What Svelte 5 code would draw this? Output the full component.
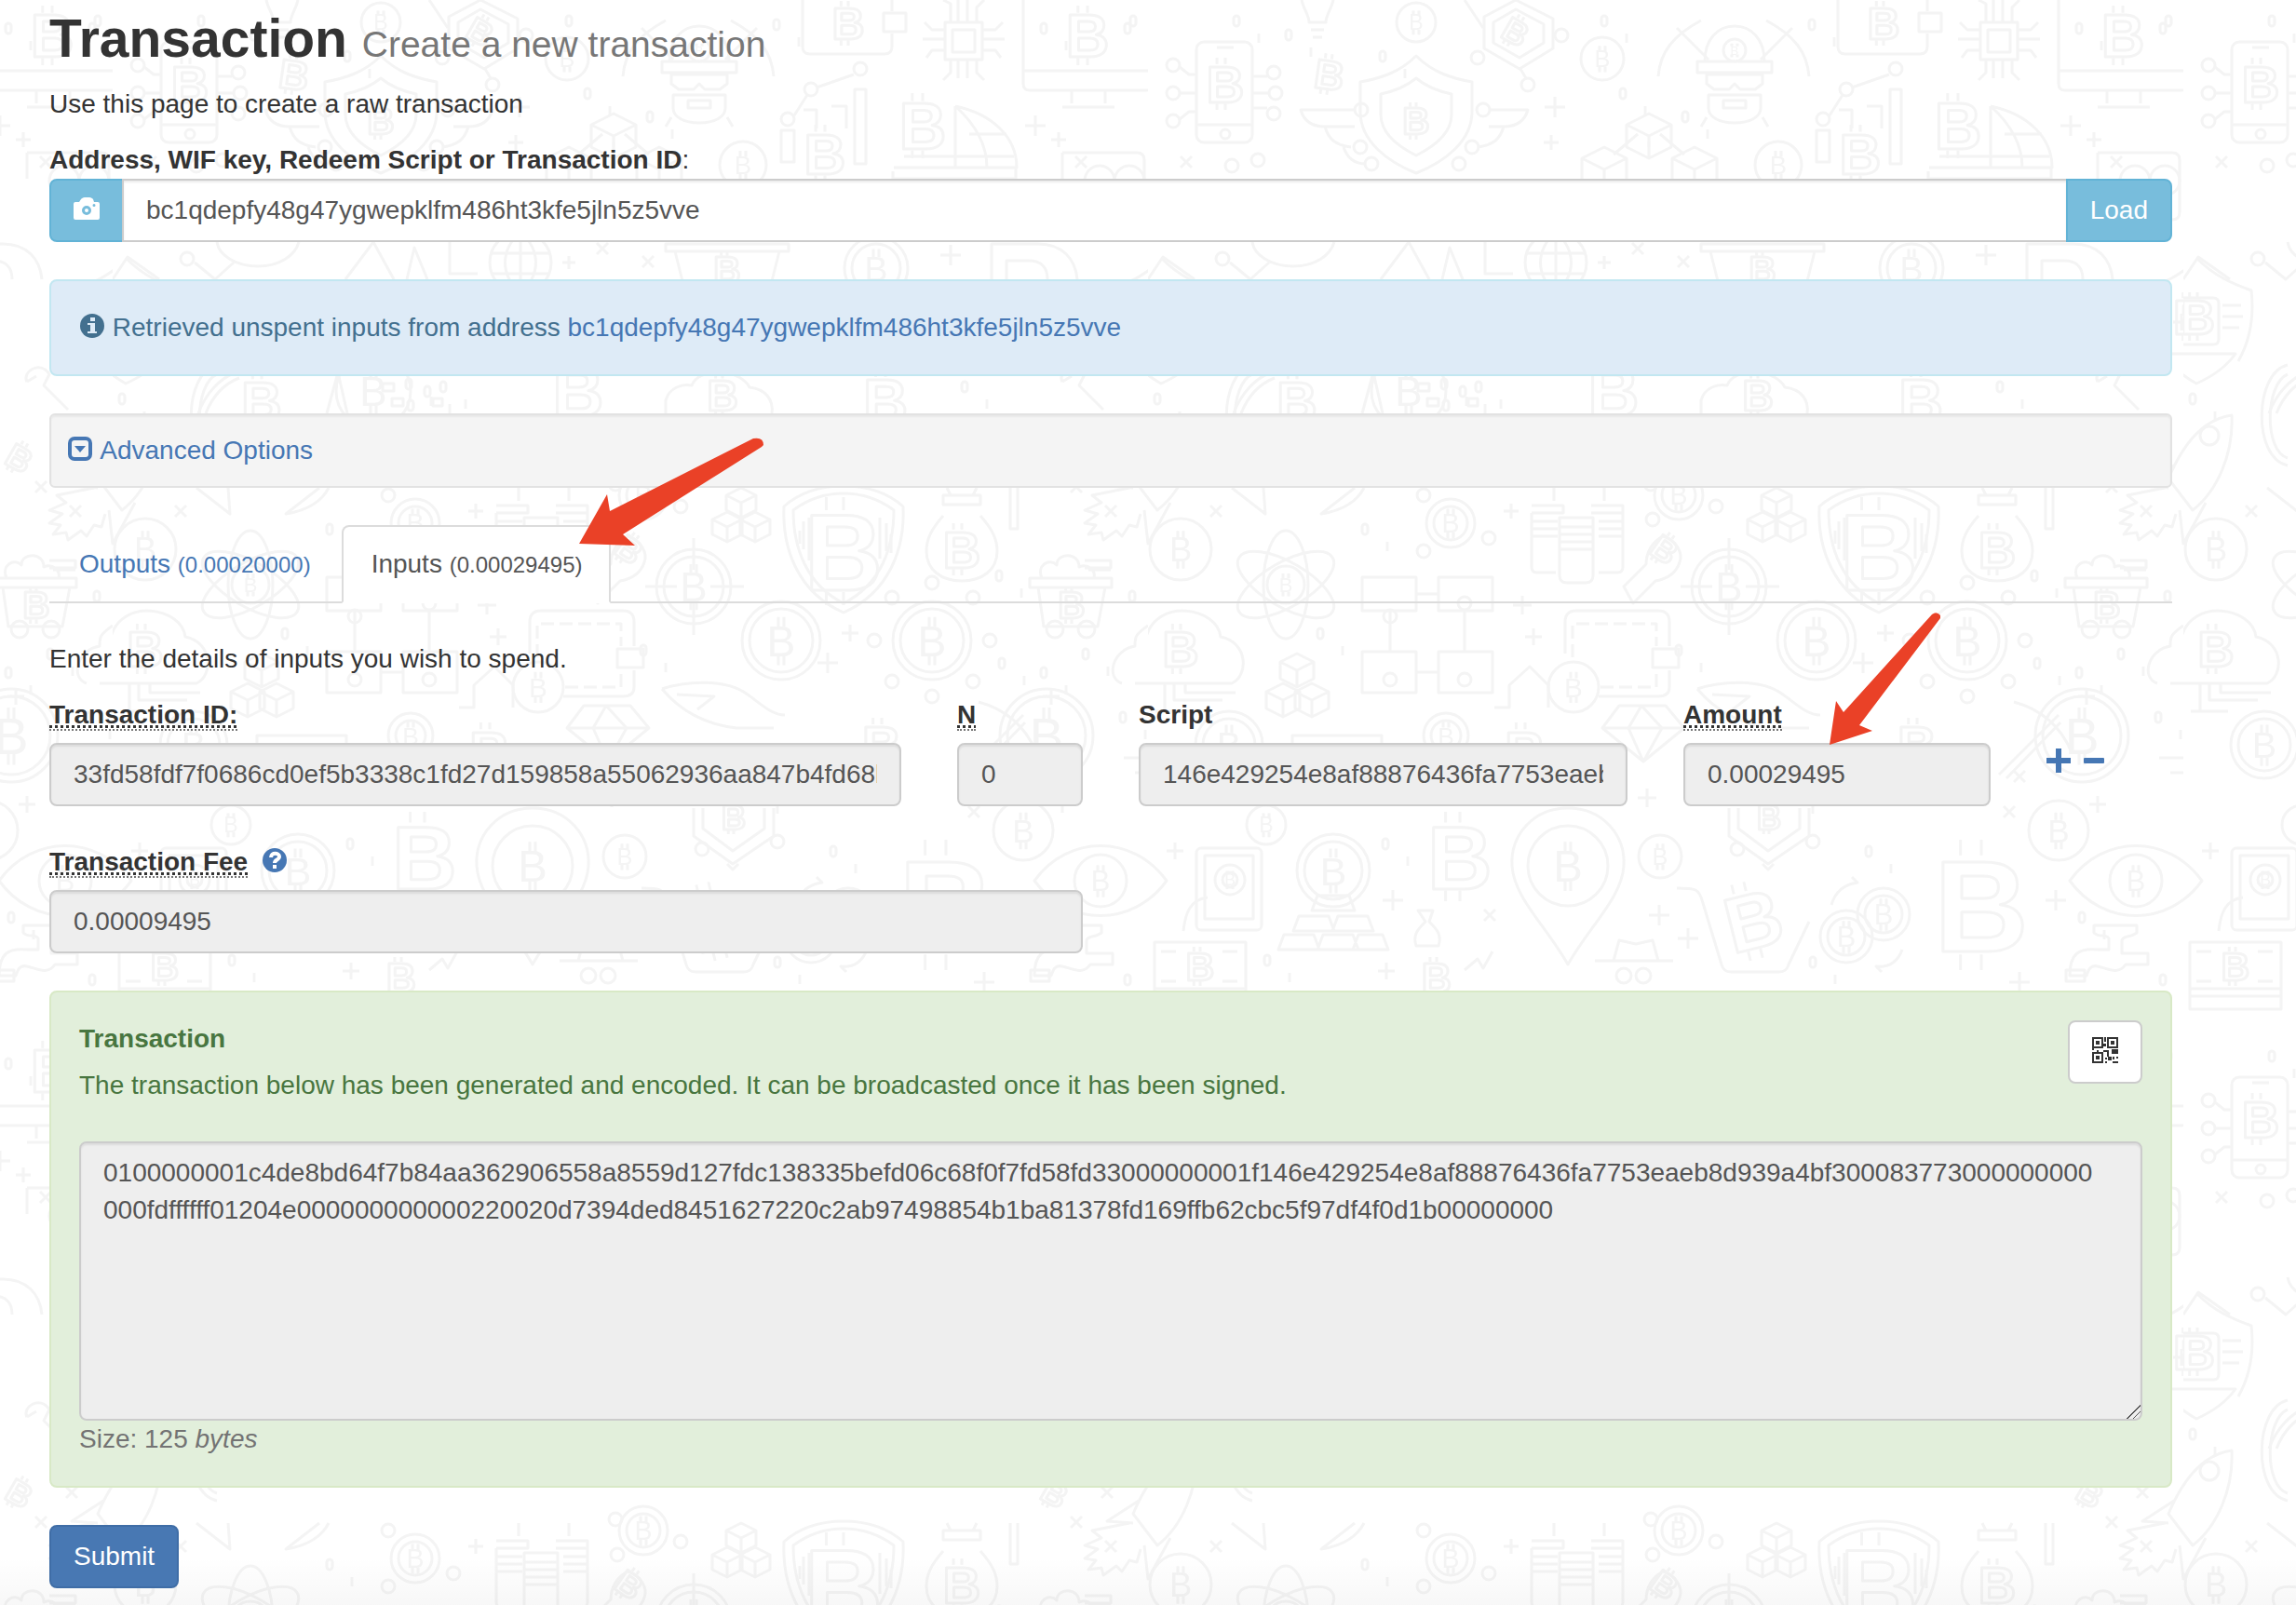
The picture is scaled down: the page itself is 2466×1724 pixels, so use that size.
<script lang="ts">
	let address = $state('bc1qdepfy48g47ygwepklfm486ht3kfe5jln5z5vve');
	let activeTab = $state('inputs');

	const tabs = [
		{ id: 'outputs', label: 'Outputs', total: '0.00020000' },
		{ id: 'inputs', label: 'Inputs', total: '0.00029495' }
	];

	const input = {
		txid: '33fd58fdf7f0686cd0ef5b3338c1fd27d159858a55062936aa847b4fd68bdec4',
		n: '0',
		script: '146e429254e8af88876436fa7753eaeb8d939a4bf300083773000000000000',
		amount: '0.00029495'
	};
	const fee = '0.00009495';
	const rawTx =
		'0100000001c4de8bd64f7b84aa362906558a8559d127fdc138335befd06c68f0f7fd58fd33000000001f' +
		input.script +
		'fdffffff01204e000000000000220020d7394ded8451627220c2ab97498854b1ba81378fd169ffb62cbc5f97df4f0d1b00000000';
	const size = 125;

	// wallpaper tile, 1112 x 1112: [x, y, radius, double ring]
	const coins: [number, number, number, boolean][] = [
		[288, 24, 21, false], [488, 63, 23, false], [677, 177, 25, false], [630, 54, 12, false],
		[820, 288, 34, true], [35, 590, 33, false], [325, 562, 26, true], [570, 532, 26, true],
		[624, 630, 40, true], [718, 688, 42, true], [880, 688, 42, true], [457, 738, 27, false],
		[1003, 790, 50, true], [87, 800, 36, true], [320, 790, 24, true], [127, 886, 21, false],
		[199, 935, 39, true], [88, 945, 16, true], [451, 930, 43, false], [550, 920, 23, false],
		[978, 892, 32, false], [1061, 946, 28, false], [790, 982, 28, true], [750, 1006, 28, true],
		[148, 628, 20, false], [280, 420, 40, false]
	];

	// outlined coin signs: [x, y, size, rotation]
	const signs: [number, number, number, number][] = [
		[83, 90, 56, 0], [195, 80, 44, 8], [288, 130, 40, 0], [790, 25, 48, 0], [1047, 38, 64, 0],
		[870, 135, 70, 0], [765, 165, 62, 0], [395, 34, 36, 30], [660, 290, 40, 0], [500, 420, 76, 0],
		[655, 424, 46, 0], [830, 430, 66, 0], [785, 592, 116, 0], [912, 590, 56, 0], [1030, 650, 40, 0],
		[35, 697, 54, 0], [15, 340, 52, 0], [1120, 340, 52, 0], [405, 806, 60, 0], [335, 920, 96, 0],
		[650, 988, 84, -14], [895, 972, 140, 0], [56, 1038, 42, 0], [310, 1050, 44, 0], [667, 878, 36, 0],
		[555, 590, 36, 35], [160, 430, 60, 0], [1012, 492, 36, 30], [826, 800, 58, 0]
	];

	const nodes: [number, number][] = [
		[27, 70], [27, 100], [27, 130], [135, 78], [137, 100], [135, 122], [354, 62], [408, 91], [444, 38],
		[750, 96], [803, 74], [725, 128], [80, 278], [229, 118], [360, 118], [228, 158], [348, 158],
		[240, 176], [334, 176], [296, 532], [366, 578], [296, 592], [542, 558], [610, 544], [540, 520],
		[880, 626], [837, 642], [924, 642], [818, 688], [942, 688], [837, 732], [924, 732], [880, 748],
		[260, 662], [340, 648], [260, 730], [340, 730], [633, 912], [714, 904], [90, 178], [118, 172]
	];

	const crosses: [number, number, number][] = [
		[437, 115, 11], [433, 153, 8], [991, 135, 11], [1016, 150, 8], [490, 282, 7], [900, 274, 11],
		[390, 549, 8], [402, 650, 10], [414, 684, 9], [792, 680, 9], [768, 712, 11], [536, 857, 10],
		[1020, 864, 9], [29, 914, 9], [263, 967, 11], [549, 983, 11], [580, 1008, 11], [975, 967, 11],
		[936, 1055, 11], [256, 1043, 9], [1008, 748, 9], [1110, 346, 9]
	];

	const exes: [number, number][] = [
		[41, 174], [526, 267], [575, 281], [73, 549], [1068, 491], [1035, 523], [1072, 549], [936, 834],
		[367, 983], [1040, 174], [925, 872]
	];

	const zeros: [number, number][] = [
		[95, 22], [151, 37], [252, 60], [490, 22], [713, 26], [510, 100], [577, 125], [318, 412], [338, 420],
		[915, 415], [10, 428], [233, 568], [952, 618], [185, 680], [570, 698], [955, 712], [1000, 722],
		[1045, 702], [1095, 640], [255, 906], [774, 914], [1003, 985], [128, 1031], [714, 1033],
		[1090, 1052], [1096, 22], [1000, 30], [1090, 30], [690, 850], [1085, 770], [320, 435], [355, 415]
	];

	const cubes: [number, number, number][] = [
		[538, 146, 24], [490, 182, 24], [587, 182, 24], [675, 540, 16], [660, 566, 16], [690, 566, 16],
		[160, 720, 18], [145, 752, 18], [176, 752, 18]
	];

	function cubePath([x, y, r]: [number, number, number]) {
		const h = r / 2;
		return `M${x} ${y - r}l${r} ${h}v${r}l${-r} ${h}l${-r} ${-h}v${-r}zM${x - r} ${y - h}l${r} ${h}l${r} ${-h}M${x} ${y}v${r}`;
	}
</script>

<div class="page">
	<svg class="wallpaper" aria-hidden="true">
		<defs>
			<pattern id="tile" x="121" y="0" width="1112" height="1112" patternUnits="userSpaceOnUse">
				<g class="art">
					{#each coins as [x, y, r, ring]}
						<circle cx={x} cy={y} {r} />
						{#if ring}<circle cx={x} cy={y} r={r - 8} />{/if}
						<text class="solid" {x} y={y + r * 0.4} font-size={r * 1.1}>B</text>
						<path d="M{x - 3} {y - r * 0.6}v{r * 0.25}M{x + 3} {y - r * 0.6}v{r * 0.25}M{x - 3} {y + r * 0.38}v{r * 0.25}M{x + 3} {y + r * 0.38}v{r * 0.25}" />
					{/each}
					{#each signs as [x, y, s, turn]}
						<g transform="translate({x} {y}) rotate({turn})">
							<text x="0" y={s * 0.36} font-size={s}>B</text>
							<path d="M{-s * 0.16} {-s * 0.38}v{-s * 0.12}M0 {-s * 0.38}v{-s * 0.12}M{-s * 0.16} {s * 0.38}v{s * 0.12}M0 {s * 0.38}v{s * 0.12}" />
						</g>
					{/each}
					{#each nodes as [x, y]}
						<circle cx={x} cy={y} r="7" />
					{/each}
					{#each crosses as [x, y, s]}
						<path d="M{x - s} {y}h{s * 2}M{x} {y - s}v{s * 2}" />
					{/each}
					{#each exes as [x, y]}
						<path d="M{x - 6} {y - 6}l12 12M{x + 6} {y - 6}l-12 12" />
					{/each}
					{#each zeros as [x, y]}
						<rect x={x - 3} y={y - 5} width="6" height="11" rx="3" />
						<path d="M{x + 24} {y + 14}v10" />
					{/each}
					{#each cubes as cube}
						<path d={cubePath(cube)} />
					{/each}

					<!-- phone, shield with wings, cards -->
					<rect x="52" y="45" width="60" height="108" rx="8" />
					<path d="M52 134h60M74 51h18M34 72l10 8h8M34 100h18M34 128l10-8h8M112 82h16M112 100h18M112 116h16" />
					<circle cx="83" cy="144" r="5" />
					<path d="M288 60c18 18 38 24 60 28v32c0 32-30 54-60 66c-30-12-60-34-60-66v-32c22-4 42-10 60-28z" />
					<path d="M288 84c12 10 24 14 38 17v22c0 20-18 34-38 44c-20-10-38-24-38-44v-22c14-3 26-7 38-17z" />
					<path d="M222 118h-58c4 14 14 18 26 18h32M190 136c4 14 12 20 28 22M210 158c4 12 12 18 24 18M366 118h42c-4 14-14 18-26 18h-16M382 136c-4 14-12 20-28 22" />
					<path d="M395 0l40 20v32l-36 22l-38-22v-34zM395 10l30 16v20l-26 16l-28-16v-22z" />
					<path d="M340 0l20 30M400 74l6 10M165 0c2 10 8 16 8 24h18c0-8 6-14 8-24M175 32h14M177 40h10" />

					<!-- miner -->
					<path d="M598 66c0-24 14-38 32-38s32 14 32 38zM590 66h80v12h-80zM600 80h60v10l-8 6h-16l-6-6l-6 6h-16l-8-6zM602 102h56v14c0 10-12 16-28 16s-28-6-28-16zM618 108h24v8h-24z" />
					<path d="M548 82c2-26 16-44 46-60M710 82c-2-26-16-44-46-60M568 30l34 34M692 30l-34 34M600 126l-6 10M660 126l6 10" />

					<!-- wallet, chip, monitor -->
					<path d="M741 0v50q0 8 8 8h80q8 0 8-8v-14M837 12v-12M828 14h24v20h-24z" />
					<path d="M894 24h40v40h-40zM902 32h24v24h-24zM900 24v-20l-8-4M908 24v-24M918 24v-24M928 24v-16l8-8M900 64v14l-8 8M908 64v20M918 64v20M928 64v14l8 8M894 32h-14l-8-8M894 42h-24M894 54h-14l-6 8M934 32h14l8-8M934 42h24M934 54h14l6 8" />
					<path d="M978 0v90q0 7 7 7h125q7 0 7-7v-90M978 76h139M1030 97v14M1066 97v14M1020 115h56" />

					<!-- chart, globe, gift, blocks -->
					<path d="M718 140h14v34h-14zM797 96h12v80h-12zM742 118h14v20M772 114h16v24M732 124l14-22M756 94l40-14" />
					<path d="M905 114c38 8 66 32 66 66h-132M905 114v66M905 114c20 18 34 40 34 66M850 168h118M920 144h40M838 184v8h132v-12" />
					<path d="M1020 164h80q8 0 8 8v56q0 8-8 8h-30M1020 164v28" />
					<circle cx="1060" cy="194" r="16" />
					<circle cx="1092" cy="194" r="16" />
					<path d="M538 158v-6M500 166l26-22M576 166l-26-22" />

					<!-- thin strip between the address box and the alert -->
					<path d="M0 300l16-24l34 24M112 260c2 14 20 26 44 26s40-12 44-26M88 282l22 18l20-18M250 300l30-40l22 40M316 300l8-34l14 34M362 260v34h30" />
					<circle cx="438" cy="282" r="33" />
					<path d="M438 249v66M406 272h64M408 294h60M438 249c-22 20-22 46 0 66M438 249c22 20 22 46 0 66" />
					<path d="M594 262h132v8h-132zM604 270l10 40M716 270l-10 40M944 300v-38h50c26 0 40 16 42 38M960 300v-20h24c14 0 20 8 20 20" />
					<path d="M92 444c8-22 24-38 40-44M100 444c8-20 20-32 36-38M230 444l12-44l10 44M290 412h12v8h-12zM300 428h12v8h-12zM344 428h10v8h-10z" />
					<path d="M594 444v-14c4-14 18-18 28-16c4-10 14-14 30-14s28 8 32 16c18 2 26 14 24 28M1020 410c-6-10 14-24 24-8l-6 12l26 26M1030 404l-10 6" />

					<!-- shield with a card and the rocket, both cross the tile edge -->
					<path d="M15 278c18 18 36 26 58 34c4 36-6 62-14 76M-6 320h38q6 0 6 6v38q0 6-6 6h-38M42 328h20M42 340h22M42 352h18M-20 380h76c-10 14-24 24-42 32c-18-10-28-20-34-32z" />
					<path d="M1127 278c-18 18-36 26-58 34c4 36 6 62 14 76M1086 380h26" />
					<path d="M52 446c-30 4-52 30-68 68l26 34c26-20 44-60 42-102zM-10 500l-34 22l28 2M24 540l-24 44l-4-36" />
					<path d="M1164 446c-30 4-52 30-68 68l26 34M1102 500l-34 22l28 2M1136 540l-24 44l-4-36" />
					<circle cx="28" cy="468" r="10" />
					<path d="M1092 524l-40 8l10 8l-18 8l14 4l-14 10l12 2l-8 10l14-2l2 8l14-10l6 6l8-12l8 2l4-14" />
					<path d="M112 392c-36 8-38 100 0 108M112 402c-24 10-26 82 0 90" />

					<!-- atom, servers, key -->
					<ellipse cx="148" cy="628" rx="24" ry="58" />
					<ellipse cx="148" cy="628" rx="24" ry="58" transform="rotate(60 148 628)" />
					<ellipse cx="148" cy="628" rx="24" ry="58" transform="rotate(-60 148 628)" />
					<path d="M90 524l36 28l-2-28M232 524c-6 12-20 24-46 28l36-28" />
					<path d="M442 556h36v62q0 8-8 8h-20q-8 0-8-8zM442 566h36M442 574h36M442 582h36M442 590h36M412 543h34v8h-34M412 560h28M412 568h28M412 576h28M412 551v58q0 6 6 6h20M476 543h34v8h-34M484 560h26M484 568h26M484 576h26M510 551v58q0 6-6 6h-20M436 524v14M490 524v14" />
					<path d="M553 576c14 4 22 18 18 28c-4 12-14 18-26 20l-24 24l-10-18l24-24c0-12 6-24 18-30z" />
					<path d="M624 578v34M624 646v36M572 630h34M642 630h36" />

					<!-- large shield, money bag, cart -->
					<path d="M785 522c-22 0-46 6-64 22c-2 44 14 92 64 114c50-22 66-70 64-114c-18-16-42-22-64-22z" />
					<path d="M785 530c-18 0-38 6-54 18c0 40 14 80 54 100c40-20 54-60 54-100c-16-12-36-18-54-18z" />
					<path d="M742 560v30M748 556v46M824 556v44M831 562v30M738 570v14M836 574v20" />
					<path d="M892 532h40v10h-40zM896 524l4 8M928 524l-4 8M892 554c-14 16-18 26-18 38c0 20 16 32 38 32s38-12 38-32c0-12-4-22-18-38M964 524v44h8v-44" />
					<path d="M985 621h88v10h-88zM994 631l6 42h58l8-42M998 621c-6-14 8-22 16-14c0-14 24-14 24 2c10-4 18 4 16 12M1044 602h28v8h-28M1048 612h24" />
					<circle cx="1012" cy="676" r="9" />
					<circle cx="1046" cy="676" r="9" />

					<!-- cloud, network boxes, card holder -->
					<path d="M-14 734h104c18-8 18-44-12-50c-4-32-68-42-80 0c-24 4-32 42-12 50zM18 734v30M28 734v18h52M40 734v10h54M8 764h40" />
					<path d="M1098 734h14M1112 672c-14 10-14 12-14 22c-24 4-32 34-14 40" />
					<path d="M230 620h58v36h-58zM312 620h58v36h-58zM230 700h58v44h-58zM312 700h58v44h-58zM260 656v44M340 656v44M288 638h24M288 722h24" />
					<path d="M456 706v-36h90v24M546 724v14h-62" stroke-dasharray="14 6" />
					<path d="M448 702v-34q0-12 12-12h88q12 0 12 12v26M560 720v18q0 10-12 10h-64M542 697h28v20h-28z" />

					<!-- hand, pickaxe and houses -->
					<path d="M590 740c24-8 68-12 92 6c14 10 26 22 40 22M590 740c20 24 46 38 80 42h40M606 746l40 2l-18 14M506 758h50l20 24l-44 36l-44-36zM488 782h88M530 758l-14 24l16 36l20-36z" />
					<path d="M930 754c30 8 50 26 62 54M978 768l-64 64M980 776l-58 60M372 760h16v-24l22-20l20 20v24" />
					<path d="M1086 814h30c12 12 16 30 10 42M1098 830h16l8 12M155 790h96v12h-96z" />

					<!-- tablet, ingots, pin -->
					<rect x="52" y="911" width="70" height="88" rx="5" />
					<path d="M61 919h52v68h-52zM38 1000c2-20 8-34 26-36M182 962h34l6 16h-46zM162 984h32l6 16h-44zM204 984h32l6 16h-44zM146 1004h32l6 16h-44zM188 1004h32l6 16h-44zM226 1004h26l6 16h-38z" />
					<path d="M451 868c-38 0-62 30-60 62c2 34 36 64 60 106c24-42 58-72 60-106c2-32-22-62-60-62z" />
					<path d="M624 868v30l42 30l44-30v-30M634 868v22l32 24l34-24v-22M660 928l6 6l6-6" />
					<path d="M568 954c20 0 24 0 28 16l20 66q2 8 10 8h52q8 0 10-8l22-46" />
					<path d="M734 972c4-14 14-22 28-24l-6-6M810 1020c-4 12-14 20-28 18l6 6" />

					<!-- eye, tap, bank note, hat -->
					<path d="M990 946c36-50 106-50 142 0c-36 50-106 50-142 0z" />
					<path d="M-122 946c36-50 106-50 142 0c-36 50-106 50-142 0z" />
					<path d="M1016 1002v-8h46v8c-8 6-14 2-16 8v14h28v12h-24c-8 12-20 4-30 2c-8-2-10 4-12 10h-18c0-24 10-30 30-28h12v-12c-4-6-10 0-16-6zM986 1042h20v12h-20z" />
					<path d="M7 1012h98v72h-98zM7 1062h98M7 1070h98M14 1022h16M80 1022h16M14 1054h16M80 1054h16" />
					<path d="M480 1032h84M500 1032l6-22l18 4l18-4l6 22M290 978l16 0l-4 12c8 8 14 14 10 26h-24c-4-12 2-18 10-26zM340 1042l14-12l6 10l10-18" />
					<circle cx="511" cy="1048" r="8" />
					<circle cx="532" cy="1048" r="8" />
				</g>
			</pattern>
			<linearGradient id="fade" x1="0" y1="0" x2="0" y2="1">
				<stop offset="0" stop-color="#000" stop-opacity="0" />
				<stop offset="1" stop-color="#000" stop-opacity="0.03" />
			</linearGradient>
		</defs>
		<rect width="100%" height="100%" fill="url(#tile)" />
		<rect y="97%" width="100%" height="3%" fill="url(#fade)" />
	</svg>

	<main>
		<h2>Transaction <small>Create a new transaction</small></h2>
		<p>Use this page to create a raw transaction</p>

		<label class="plain-label" for="address"><b>Address, WIF key, Redeem Script or Transaction ID</b>:</label>
		<div class="input-group">
			<button class="btn btn-info" type="button" aria-label="Scan QR code">
				<svg class="icon" viewBox="0 0 28 28">
					<path fill="currentColor" fill-rule="evenodd" d="M2 7h4l2-3c1-1 2-2 4-2h5c2 0 3 1 4 2l1 3h4q2 0 2 2v15q0 2-2 2H2q-2 0-2-2V9q0-2 2-2zM14 11a5 5 0 1 0 0 10a5 5 0 0 0 0-10zM22 9a1 1 0 1 0 0 3a1 1 0 0 0 0-3zM14 14a2 2 0 1 1 0 4a2 2 0 0 1 0-4z" />
				</svg>
			</button>
			<input id="address" class="form-control" type="text" bind:value={address} />
			<button class="btn btn-info load" type="button">Load</button>
		</div>

		<div class="alert alert-info">
			<svg class="icon" viewBox="0 0 28 28" aria-hidden="true">
				<circle cx="14" cy="14" r="13" fill="currentColor" />
				<path fill="#deebf7" d="M12 5h5v4h-5zM9 11h8v9h2v2H9v-2h3v-7H9z" />
			</svg>
			Retrieved unspent inputs from address <a href="#address">{address}</a>
		</div>

		<div class="well">
			<a href="#advanced">
				<svg class="icon" viewBox="0 0 28 28" aria-hidden="true">
					<rect x="2" y="3" width="22" height="22" rx="5" fill="none" stroke="currentColor" stroke-width="4" />
					<path fill="currentColor" d="M7 11h12l-6 7z" />
				</svg>
				Advanced Options</a>
		</div>

		<ul class="tabs">
			{#each tabs as tab}
				<li class:active={activeTab === tab.id}>
					<a href="#{tab.id}" onclick={() => (activeTab = tab.id)}>{tab.label} <small>({tab.total})</small></a>
					{#if tab.id === 'inputs'}
						<svg class="arrow arrow-tab" viewBox="0 0 200 118" aria-hidden="true">
							<path d="M0 114L30 61L33 79L187 1Q198 -1 198 8L196 10L47 104L60 116z" />
						</svg>
					{/if}
				</li>
			{/each}
		</ul>

		<p>Enter the details of inputs you wish to spend.</p>

		<div class="row">
			<div class="field span-5">
				<label for="txid"><abbr title="Transaction ID of the unspent output">Transaction ID:</abbr></label>
				<input id="txid" class="form-control" type="text" value={input.txid} readonly />
			</div>
			<div class="field span-1">
				<label for="n"><abbr title="Index of the unspent output">N</abbr></label>
				<input id="n" class="form-control" type="text" value={input.n} readonly />
			</div>
			<div class="field span-3">
				<label for="script">Script</label>
				<input id="script" class="form-control" type="text" value={input.script} readonly />
			</div>
			<div class="field span-2">
				<label for="amount"><abbr title="Amount held by the output">Amount</abbr></label>
				<input id="amount" class="form-control" type="text" value={input.amount} readonly />
				<svg class="arrow arrow-amount" viewBox="0 0 120 144" aria-hidden="true">
					<path d="M0 143L7 96L15 108L110 3Q115 -1 119 4L119 7L32 122L46 128z" />
				</svg>
			</div>
			<div class="field span-1 actions">
				<a href="#add" aria-label="Add input">
					<svg class="icon" viewBox="0 0 28 28"><path fill="currentColor" d="M10 1h6v10h10v6H16v10h-6V17H0v-6h10z" /></svg>
				</a>
				<a href="#remove" aria-label="Remove input">
					<svg class="icon" viewBox="0 0 28 28"><rect x="4" y="11" width="22" height="6" rx="1" fill="currentColor" /></svg>
				</a>
			</div>
		</div>

		<div class="row">
			<div class="field span-6">
				<div class="label-line">
					<label for="fee"><abbr title="Inputs less outputs">Transaction Fee</abbr></label>
					<a href="#fees" aria-label="About fees">
						<svg class="icon" viewBox="0 0 28 28">
							<circle cx="14" cy="14" r="13" fill="currentColor" />
							<path fill="none" stroke="#fff" stroke-width="4" d="M10 11c0-6 9-5 9-1c0 4-5 3-5 7" />
							<path fill="#fff" d="M12 19h4v4h-4z" />
						</svg>
					</a>
				</div>
				<input id="fee" class="form-control" type="text" value={fee} readonly />
			</div>
		</div>

		<div class="alert alert-success">
			<div class="result-head">
				<div>
					<label for="raw">Transaction</label>
					<p>The transaction below has been generated and encoded. It can be broadcasted once it has been signed.</p>
				</div>
				<button class="btn btn-default" type="button" aria-label="Show QR code">
					<svg class="icon" viewBox="0 0 28 28">
						<path fill="currentColor" fill-rule="evenodd" d="M0 0h12v12H0zM2 2v8h8V2zM4 4h4v4H4zM16 0h12v12H16zM18 2v8h8V2zM20 4h4v4h-4zM0 16h12v12H0zM2 18v8h8v-8zM4 20h4v4H4zM13 0h2v5h-2zM12 7h3v3h-3zM0 12h2v2H0zM5 14h2v2H5zM12 14h6v7h-2v-5h-4zM21 13h7v5h-7zM17 21h4v4h-4zM22 21h2v3h-2zM14 26h2v2h-2zM22 26h6v2h-6zM26 21h2v2h-2zM14 22h2v2h-2z" />
					</svg>
				</button>
			</div>
			<textarea id="raw" class="form-control" readonly value={rawTx}></textarea>
			<span class="size">Size: {size} <i>bytes</i></span>
		</div>

		<button class="btn btn-primary" type="submit">Submit</button>
	</main>
</div>

<style>
	:global(body) { background: #fff; }

	.page { position: relative; min-height: 100vh; font-family: 'Helvetica Neue', 'Liberation Sans', Arial, sans-serif; font-size: 28px; line-height: 40px; color: #333; }
	.wallpaper { position: absolute; top: 0; left: 0; width: 100%; height: 100%; }
	.art { fill: none; stroke: #f4f4f4; stroke-width: 3; stroke-linejoin: round; }
	.art text { font-family: 'Liberation Sans', Arial, sans-serif; font-weight: 700; text-anchor: middle; }
	.art .solid { fill: #f4f4f4; stroke: none; font-weight: 400; }

	main { position: relative; box-sizing: border-box; padding: 8px 133px 18px 53px; }
	h2 { margin: 0 0 18px; font-size: 57px; font-weight: 700; line-height: 66px; }
	h2 small { font-size: 39px; font-weight: 400; color: #777; }
	small { line-height: 1; }
	p { margin: 0 0 20px; }
	a { color: #4677b4; text-decoration: none; }
	label { display: block; font-weight: 700; }
	.plain-label { font-weight: 400; }
	abbr { border-bottom: 2px dotted #777; text-decoration: underline dotted 3px; text-underline-offset: 2px; text-decoration-skip-ink: none; }
	.icon { display: inline-block; width: 28px; height: 28px; vertical-align: -3px; }

	.form-control { display: block; box-sizing: border-box; width: 100%; height: 68px; margin: 0; padding: 12px 24px; border: 2px solid #ccc; border-radius: 8px; background: #fff; box-shadow: inset 0 2px 2px rgba(0, 0, 0, 0.075); font: inherit; line-height: 40px; color: #555; }
	.form-control[readonly] { background: #eee; }

	.btn { box-sizing: border-box; flex: none; height: 68px; padding: 12px 24px; border: 2px solid transparent; border-radius: 8px; font: inherit; line-height: 40px; cursor: pointer; }
	.btn-info { background: #78bddc; border-color: #62b3d6; color: #fff; }
	.btn-default { background: #fff; border-color: #ccc; color: #333; }
	.btn-primary { background: #4878b3; border-color: #3f6da6; color: #fff; }

	.input-group { display: flex; margin-bottom: 40px; }
	.input-group .btn { border-radius: 8px 0 0 8px; }
	.input-group .form-control { position: relative; flex: 1; width: auto; min-width: 0; margin-left: -2px; border-radius: 0; }
	.input-group .load { position: relative; margin-left: -2px; border-radius: 0 8px 8px 0; }

	.alert { margin-bottom: 40px; padding: 30px; border: 2px solid; border-radius: 8px; }
	.alert-info { background: #deebf7; border-color: #c2e7f1; color: #43708f; }
	.alert-success { background: #e2efdb; border-color: #d8e9c6; color: #487640; }
	.well { margin-bottom: 40px; padding: 18px; border: 2px solid #e2e2e2; border-radius: 6px; background: #f4f4f4; box-shadow: inset 0 2px 2px rgba(0, 0, 0, 0.05); }

	.tabs { display: flex; gap: 2px; margin: 0 0 40px; padding: 0; border-bottom: 2px solid #dcdcdc; list-style: none; }
	.tabs li { position: relative; margin-bottom: -2px; }
	.tabs a { display: block; padding: 20px 29px 20px 30px; border: 2px solid transparent; border-radius: 8px 8px 0 0; }
	.tabs small { font-size: 24px; }
	.tabs .active a { background: #fff; border-color: #dcdcdc; border-bottom-color: #fff; color: #555; }

	.row { display: grid; grid-template-columns: repeat(12, minmax(0, 1fr)); column-gap: 60px; margin-bottom: 40px; }
	.field { position: relative; display: flex; flex-direction: column; gap: 10px; }
	.span-1 { grid-column: span 1; }
	.span-2 { grid-column: span 2; }
	.span-3 { grid-column: span 3; }
	.span-5 { grid-column: span 5; }
	.span-6 { grid-column: span 6; }
	.actions { flex-direction: row; align-items: center; gap: 8px; padding-top: 24px; }
	.label-line { display: flex; gap: 15px; }

	.result-head { display: flex; justify-content: space-between; align-items: flex-start; margin-bottom: 40px; }
	.result-head p { margin: 10px 0 0; }
	textarea.form-control { height: 300px; padding-right: 38px; resize: vertical; word-break: break-all; }
	textarea::-webkit-resizer { background: linear-gradient(135deg, transparent 48%, #555 48%, #555 54%, transparent 54%, transparent 70%, #555 70%, #555 76%, transparent 76%); }
	.size { color: #737373; }

	.arrow { position: absolute; z-index: 1; fill: #ea4127; pointer-events: none; overflow: visible; }
	.arrow-tab { top: -94px; left: 255px; width: 200px; height: 118px; }
	.arrow-amount { top: -91px; left: 157px; width: 120px; height: 144px; }
</style>
